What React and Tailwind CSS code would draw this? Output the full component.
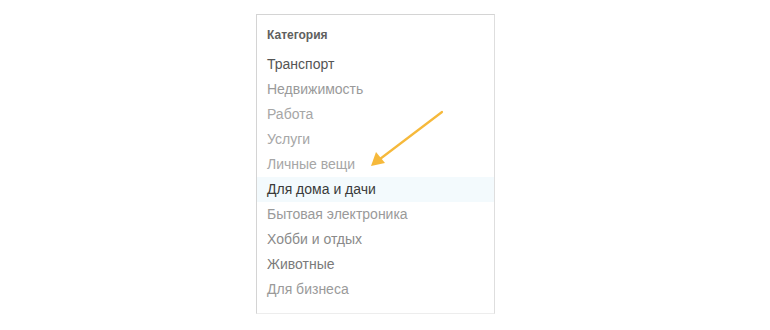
export default function App() {
  const items = [
    { label: "Транспорт", color: "text-[#555555]" },
    { label: "Недвижимость", color: "text-[#9a9a9a]" },
    { label: "Работа", color: "text-[#a6a6a6]" },
    { label: "Услуги", color: "text-[#a6a6a6]" },
    { label: "Личные вещи", color: "text-[#a6a6a6]" },
    { label: "Для дома и дачи", color: "text-[#3a3a3a]", active: true },
    { label: "Бытовая электроника", color: "text-[#9a9a9a]" },
    { label: "Хобби и отдых", color: "text-[#8a8a8a]" },
    { label: "Животные", color: "text-[#7a7a7a]" },
    { label: "Для бизнеса", color: "text-[#9a9a9a]" },
  ];

  return (
    <div
      className="relative w-[770px] h-[330px] bg-white overflow-hidden"
      style={{ fontFamily: '"Liberation Sans", Arial, sans-serif' }}
    >
      <div className="absolute left-[256px] top-[14px] w-[239px] h-[300px] border border-[#d4d4d4] border-b-[#ededed] border-r-[#dedede] bg-white">
        <div className="pt-[10px] pl-[10px] h-[37px] text-[12px] font-bold leading-[20px] text-[#606060]">
          Категория
        </div>
        <ul>
          {items.map((it) => (
            <li
              key={it.label}
              className={`h-[25px] pl-[10px] text-[14px] leading-[25px] ${it.color} ${
                it.active ? "bg-[#f3fafd]" : ""
              }`}
            >
              {it.label}
            </li>
          ))}
        </ul>
      </div>
      <svg
        className="absolute left-0 top-0"
        width="770"
        height="330"
        viewBox="0 0 770 330"
      >
        <line x1="442" y1="112" x2="380" y2="159" stroke="#f6b93b" strokeWidth="2.2" strokeLinecap="round" />
        <polygon points="371,166 376,152 385,163" fill="#f6b93b" />
      </svg>
    </div>
  );
}
